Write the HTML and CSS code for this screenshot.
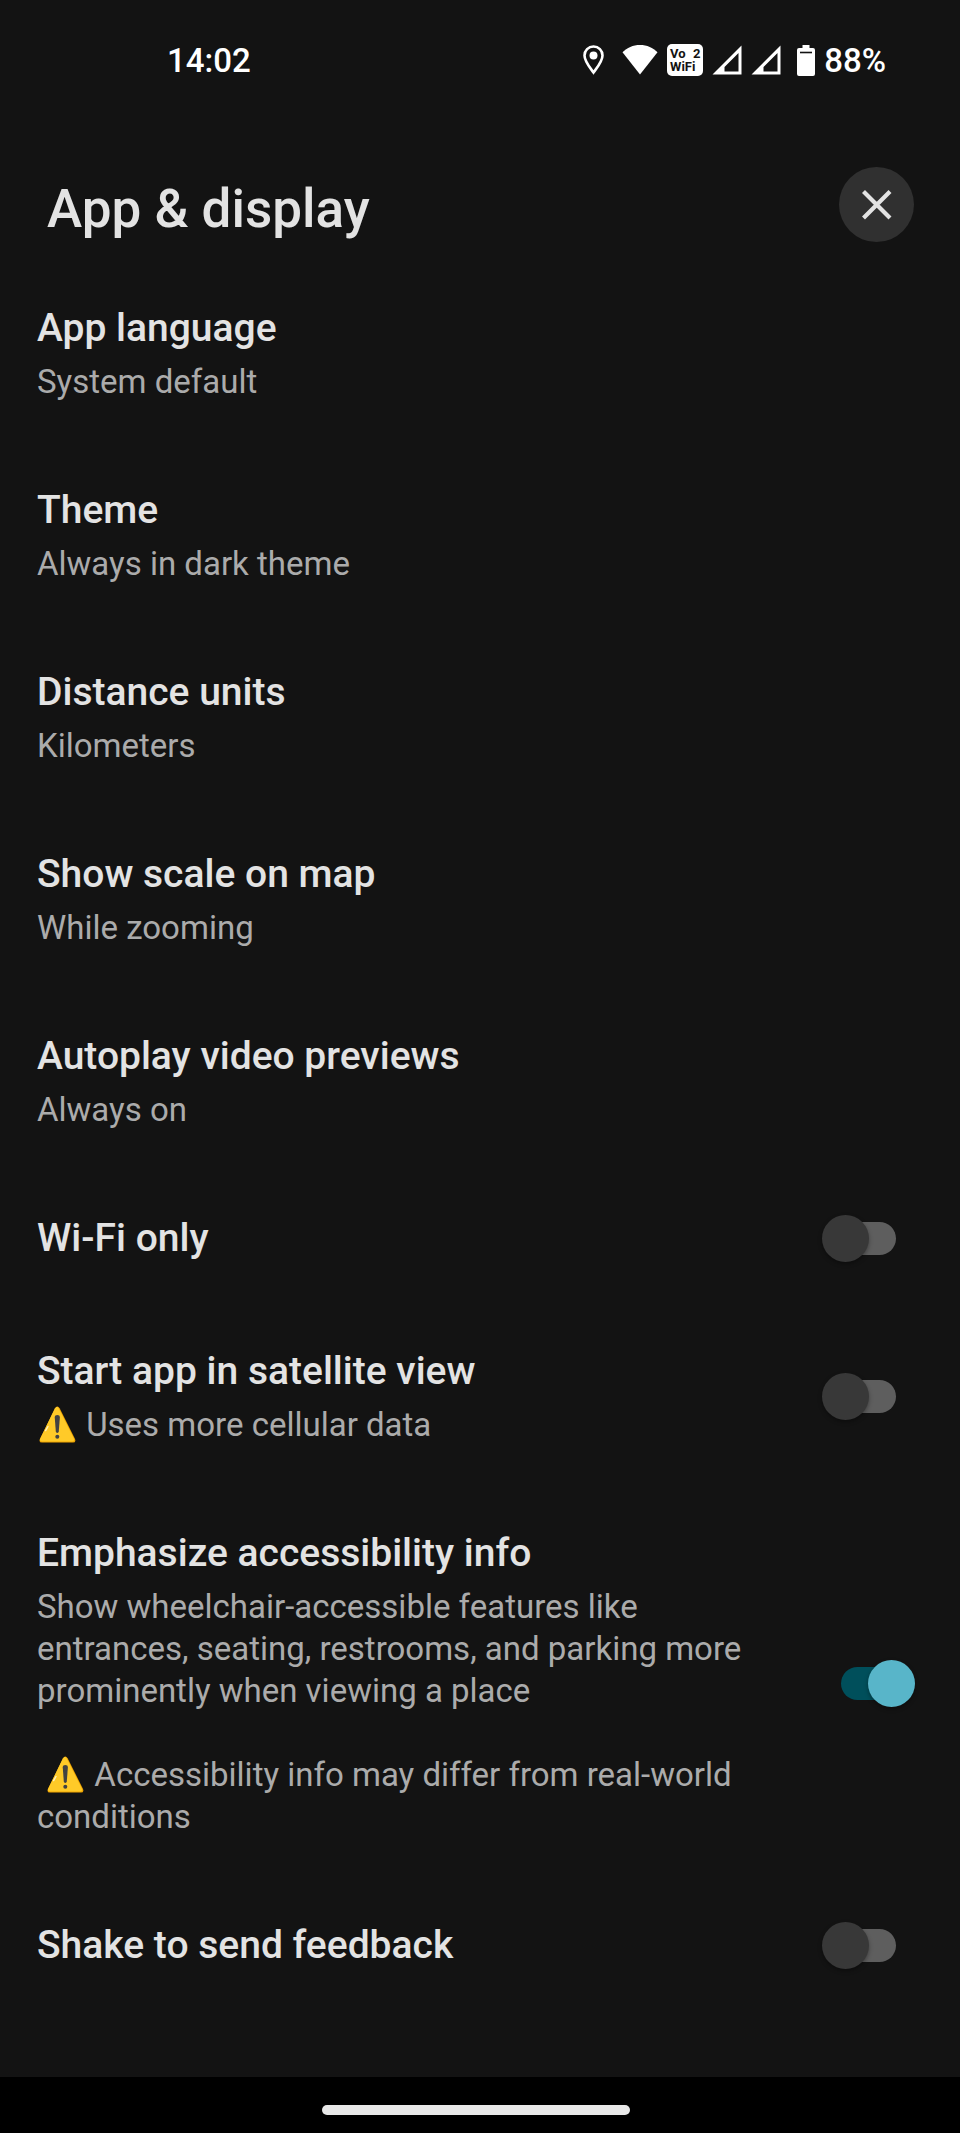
FILE: index.html
```html
<!DOCTYPE html>
<html lang="en">
<head>
  <meta charset="UTF-8">
  <meta content="width=device-width, initial-scale=1.0" name="viewport">
  <title>App &amp; display</title>
  <link rel="stylesheet" href="styles.css">
</head>
<body>

<!-- warning sign, used in the summaries -->
<svg class="sprite" aria-hidden="true">
  <symbol id="warning" viewBox="0 0 37 37">
    <path d="M16.2 2.2Q18.4-1.2 20.6 2.2L36 33Q37.2 36.6 34 36.6H3Q-.4 36.6 .9 33Z" fill="#f2a600"/>
    <path d="M15.8 2.4Q18-.8 19.8 2.4L34.8 32.6Q35.8 35.4 33 35.4H3Q0 35.4 1.3 32.6Z" fill="#ffca28"/>
    <path d="M9 20.5L6.6 24.6" stroke="#fff3c0" stroke-width="1.4" stroke-linecap="round"/>
    <path d="M15.7 11Q15.7 9 18.3 9T20.9 11L19.8 25.3Q19.6 27 18.3 27T16.8 25.3Z" fill="#424242"/>
    <circle cx="18.3" cy="30.8" r="2" fill="#424242"/>
  </symbol>
</svg>

<div class="app">

  <!-- status bar -->
  <div class="status-bar">
    <span class="clock">14:02</span>
    <div class="status-icons">
      <svg class="pin" width="21" height="30" viewBox="0 0 21 30">
        <path d="M10.500 1.500C5.400 1.500 1.500 5.500 1.500 10.500C1.500 16.500 7 22.500 10.500 27.500C14 22.500 19.500 16.500 19.500 10.500C19.500 5.500 15.600 1.500 10.500 1.500Z" fill="none" stroke="#fff" stroke-width="2.600"/>
        <circle cx="10.500" cy="10.500" r="4" fill="#fff"/>
      </svg>
      <svg class="wifi" width="36" height="30" viewBox="0 0 36 30">
        <path d="M18 0C11 0 5 2.700 .5 7.300L18 29.500L35.500 7.300C31 2.700 25 0 18 0Z" fill="#fff"/>
      </svg>
      <svg class="vowifi" width="36" height="32" viewBox="0 0 36 32">
        <rect width="36" height="32" rx="5" fill="#fff"/>
        <text x="3" y="14">Vo</text>
        <text x="26" y="14">2</text>
        <text x="3" y="27">WiFi</text>
      </svg>
      <svg class="signal" width="30" height="30" viewBox="0 0 30 30">
        <path d="M29.500 .5V29.500H.5ZM26.500 8L12.500 22V26.500H26.500Z" fill="#fff" fill-rule="evenodd"/>
      </svg>
      <svg class="signal" width="30" height="30" viewBox="0 0 30 30">
        <path d="M29.500 .5V29.500H.5ZM26.500 8L12.500 22V26.500H26.500Z" fill="#fff" fill-rule="evenodd"/>
      </svg>
      <svg class="battery" width="18" height="31" viewBox="0 0 18 31">
        <path d="M5.500 0H12.500V3H16Q18 3 18 5V29Q18 31 16 31H2Q0 31 0 29V5Q0 3 2 3H5.500Z" fill="#fff"/>
        <path d="M3 7.500H15" stroke="#131313" stroke-width="1.600"/>
      </svg>
      <span class="battery-level">88%</span>
    </div>
  </div>

  <!-- page header -->
  <header class="page-header">
    <h1>App &amp; display</h1>
    <button class="close" type="button" aria-label="Close">
      <svg width="30" height="30" viewBox="0 0 30 30">
        <path d="M1.500 1.500L28 28M28 1.500L1.500 28" stroke="#e3e3e3" stroke-width="4.200"/>
      </svg>
    </button>
  </header>

  <!-- settings -->
  <main class="settings">
    <button class="row" type="button">
      <span class="title">App language</span>
      <span class="summary">System default</span>
    </button>
    <button class="row" type="button">
      <span class="title">Theme</span>
      <span class="summary">Always in dark theme</span>
    </button>
    <button class="row" type="button">
      <span class="title">Distance units</span>
      <span class="summary">Kilometers</span>
    </button>
    <button class="row" type="button">
      <span class="title">Show scale on map</span>
      <span class="summary">While zooming</span>
    </button>
    <button class="row" type="button">
      <span class="title">Autoplay video previews</span>
      <span class="summary">Always on</span>
    </button>

    <label class="row switch-row" for="wifi-only">
      <span class="row-text">
        <span class="title">Wi-Fi only</span>
      </span>
      <input class="switch" id="wifi-only" type="checkbox" role="switch">
    </label>
    <label class="row switch-row" for="satellite">
      <span class="row-text">
        <span class="title">Start app in satellite view</span>
        <span class="summary"><svg class="warning"><use href="#warning"/></svg> Uses more cellular data</span>
      </span>
      <input class="switch" id="satellite" type="checkbox" role="switch">
    </label>
    <label class="row switch-row" for="accessibility">
      <span class="row-text">
        <span class="title">Emphasize accessibility info</span>
        <span class="summary">Show wheelchair-accessible features like entrances, seating, restrooms, and parking more prominently when viewing a place</span>
        <span class="summary note">&nbsp;<svg class="warning"><use href="#warning"/></svg> Accessibility info may differ from real-world conditions</span>
      </span>
      <input checked class="switch" id="accessibility" type="checkbox" role="switch">
    </label>
    <label class="row switch-row" for="shake">
      <span class="row-text">
        <span class="title">Shake to send feedback</span>
      </span>
      <input class="switch" id="shake" type="checkbox" role="switch">
    </label>
  </main>

  <!-- gesture bar -->
  <div class="nav-bar">
    <div class="handle"></div>
  </div>
</div>
</body>
</html>
```

FILE: styles.css
```css
:root{
  --background: #131313;
  --primary-text: #e3e3e3;
  --secondary-text: #ababab;
  --button-background: #303030;
  --track-off: #5e5e5e;
  --thumb-off: #383838;
  --track-on: #004f5b;
  --thumb-on: #58b5c9;
}

*{
  box-sizing: border-box;
}

body{
  margin: 0;
  background-color: var(--background);
  color: var(--primary-text);
  font-family: Roboto, sans-serif;
}

.sprite{
  display: none;
}

.app{
  min-height: 100vh;
  display: flex;
  flex-direction: column;
}

/* status bar */
.status-bar{
  height: 120px;
  padding: 0 74px 0 167px;
  display: flex;
  align-items: center;
  justify-content: space-between;
  color: white;
  font-size: 33px;
  font-weight: 500;
}

.status-icons{
  display: flex;
  align-items: center;
  gap: 9px;
}

.pin{
  margin-right: 9px;
}

.vowifi text{
  font-size: 13px;
  font-weight: 700;
  fill: #131313;
}

.battery{
  margin-left: 7px;
}

/* page header */
.page-header{
  height: 142px;
  padding: 47px 46px 0 47px;
  display: flex;
  align-items: flex-start;
  justify-content: space-between;
}

h1{
  margin: 0;
  padding-top: 7px;
  font-size: 53px;
  line-height: 70px;
  font-weight: 500;
}

.close{
  width: 75px;
  height: 75px;
  padding: 0;
  display: flex;
  align-items: center;
  justify-content: center;
  border: none;
  border-radius: 50%;
  background-color: var(--button-background);
}

/* settings rows */
.settings{
  flex: 1;
}

.row{
  width: 100%;
  padding: 41px 45px 41px 37px;
  display: block;
  border: none;
  background: none;
  color: inherit;
  font-family: inherit;
  text-align: left;
}

.title{
  display: block;
  font-size: 39px;
  line-height: 51px;
  font-weight: 500;
}

.summary{
  display: block;
  margin-top: 7px;
  font-size: 33px;
  line-height: 42px;
  color: var(--secondary-text);
}

.note{
  margin-top: 42px;
}

.warning{
  width: 37px;
  height: 37px;
  margin: 0 2px;
  vertical-align: -7px;
}

.switch-row{
  display: flex;
  align-items: center;
  justify-content: space-between;
  gap: 55px;
}

.row-text{
  flex: 1;
}

/* switch */
.switch{
  flex: none;
  position: relative;
  width: 93px;
  height: 47px;
  margin: 0;
  appearance: none;
}

.switch::before{
  content: '';
  position: absolute;
  top: 7px;
  left: 19px;
  width: 55px;
  height: 33px;
  border-radius: 17px;
  background-color: var(--track-off);
}

.switch::after{
  content: '';
  position: absolute;
  top: 0;
  left: 0;
  width: 47px;
  height: 47px;
  border-radius: 50%;
  background-color: var(--thumb-off);
  box-shadow: 0 2px 4px rgba(0, 0, 0, .35);
}

.switch:checked::before{
  background-color: var(--track-on);
}

.switch:checked::after{
  left: auto;
  right: 0;
  background-color: var(--thumb-on);
}

/* gesture bar */
.nav-bar{
  height: 56px;
  padding: 28px 8px 0 0;
  background-color: black;
}

.handle{
  width: 308px;
  height: 10px;
  margin: 0 auto;
  border-radius: 5px;
  background-color: #e8e8e8;
}
```
